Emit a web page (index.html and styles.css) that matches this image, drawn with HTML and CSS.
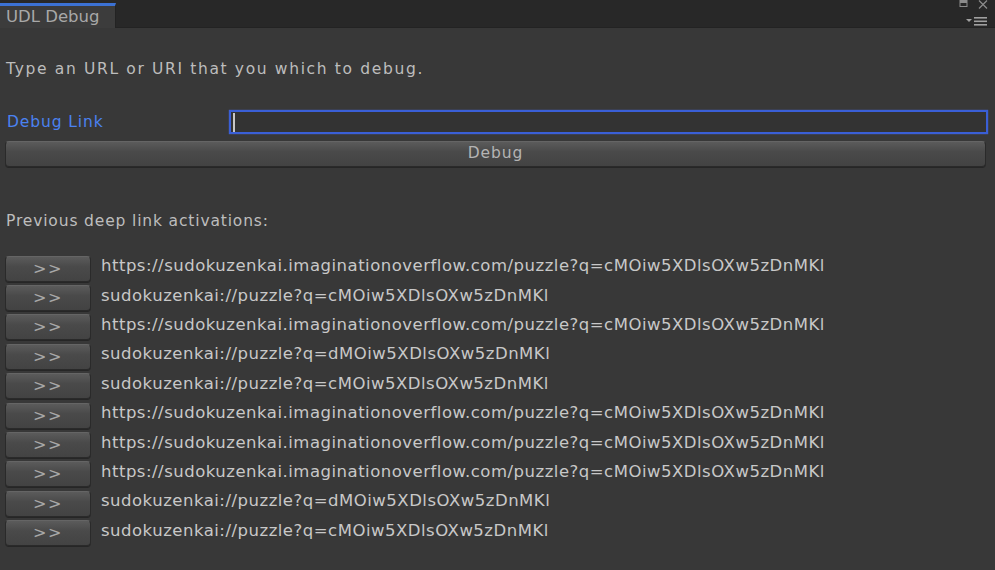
FILE: index.html
```html
<!DOCTYPE html>
<html>
<head>
<meta charset="utf-8">
<link rel="stylesheet" href="styles.css">
</head>
<body>
<div class="window">
  <div class="tabbar">
    <div class="tab">UDL Debug</div>
    <div class="controls">
      <div class="ctl-top">
        <svg width="10" height="8" viewBox="0 0 10 8"><rect x="1" y="0.5" width="7" height="6" fill="none" stroke="#8c8c8c" stroke-width="1"/><rect x="1" y="0.5" width="7" height="2.5" fill="#8c8c8c"/></svg>
        <svg width="12" height="9" viewBox="0 0 12 9"><path d="M2 0.5 L10 8.5 M10 0.5 L2 8.5" stroke="#8c8c8c" stroke-width="1.2"/></svg>
      </div>
      <div class="ctl-menu">
        <svg width="22" height="9" viewBox="0 0 22 9"><path d="M0 2 L6 2 L3 5 Z" fill="#a0a0a0"/><rect x="8" y="0" width="13" height="1.6" fill="#a0a0a0"/><rect x="8" y="3.5" width="13" height="1.6" fill="#a0a0a0"/><rect x="8" y="7" width="13" height="1.6" fill="#a0a0a0"/></svg>
      </div>
    </div>
  </div>
  <div class="content">
    <p class="label intro">Type an URL or URI that you which to debug.</p>
    <div class="field-row">
      <span class="field-label">Debug Link</span>
      <div class="input"><span class="caret"></span></div>
    </div>
    <div class="btn wide">Debug</div>
    <p class="label prev">Previous deep link activations:</p>
    <div class="list">
      <div class="row"><div class="btn small">&gt;&gt;</div><span class="link">https://sudokuzenkai.imaginationoverflow.com/puzzle?q=cMOiw5XDlsOXw5zDnMKl</span></div>
      <div class="row"><div class="btn small">&gt;&gt;</div><span class="link">sudokuzenkai://puzzle?q=cMOiw5XDlsOXw5zDnMKl</span></div>
      <div class="row"><div class="btn small">&gt;&gt;</div><span class="link">https://sudokuzenkai.imaginationoverflow.com/puzzle?q=cMOiw5XDlsOXw5zDnMKl</span></div>
      <div class="row"><div class="btn small">&gt;&gt;</div><span class="link">sudokuzenkai://puzzle?q=dMOiw5XDlsOXw5zDnMKl</span></div>
      <div class="row"><div class="btn small">&gt;&gt;</div><span class="link">sudokuzenkai://puzzle?q=cMOiw5XDlsOXw5zDnMKl</span></div>
      <div class="row"><div class="btn small">&gt;&gt;</div><span class="link">https://sudokuzenkai.imaginationoverflow.com/puzzle?q=cMOiw5XDlsOXw5zDnMKl</span></div>
      <div class="row"><div class="btn small">&gt;&gt;</div><span class="link">https://sudokuzenkai.imaginationoverflow.com/puzzle?q=cMOiw5XDlsOXw5zDnMKl</span></div>
      <div class="row"><div class="btn small">&gt;&gt;</div><span class="link">https://sudokuzenkai.imaginationoverflow.com/puzzle?q=cMOiw5XDlsOXw5zDnMKl</span></div>
      <div class="row"><div class="btn small">&gt;&gt;</div><span class="link">sudokuzenkai://puzzle?q=dMOiw5XDlsOXw5zDnMKl</span></div>
      <div class="row"><div class="btn small">&gt;&gt;</div><span class="link">sudokuzenkai://puzzle?q=cMOiw5XDlsOXw5zDnMKl</span></div>
    </div>
  </div>
</div>
</body>
</html>
```

FILE: styles.css
```css
html, body {
  margin: 0;
  padding: 0;
  background: #383838;
}
body {
  font-family: "DejaVu Sans", Verdana, sans-serif;
  width: 995px;
  height: 570px;
  overflow: hidden;
}
.window {
  display: flex;
  flex-direction: column;
  height: 570px;
}
.tabbar {
  height: 27px;
  background: #282828;
  border-bottom: 1px solid #232323;
  display: flex;
  justify-content: space-between;
  align-items: flex-end;
}
.tab {
  height: 22px;
  background: #3c3c3c;
  border-top: 3px solid #3c72d4;
  border-right: 1px solid #232323;
  color: #a8a8a8;
  font-size: 16.5px;
  line-height: 21px;
  padding-left: 6px;
  width: 109px;
  margin-bottom: -1px;
}
.controls {
  display: flex;
  flex-direction: column;
  align-items: flex-end;
  align-self: stretch;
  padding-right: 6px;
}
.ctl-top {
  display: flex;
  gap: 8px;
  align-items: flex-start;
  height: 12px;
}
.ctl-menu {
  margin-top: 2px;
  margin-right: 1px;
}
.content {
  padding: 0 9px 0 5px;
}
.label {
  margin: 0;
  color: #bdbdbd;
  font-size: 15.5px;
  padding-left: 1px;
}
.intro {
  margin-top: 31px;
  line-height: 20px;
  letter-spacing: 1.65px;
}
.field-row {
  display: flex;
  align-items: center;
  margin-top: 31px;
  height: 24px;
}
.field-label {
  color: #4b82f0;
  font-size: 15.5px;
  letter-spacing: 0.9px;
  width: 222px;
  padding-left: 2px;
}
.input {
  flex: 1;
  height: 20px;
  border: 2px solid #3a5fd6;
  background: #333333;
  box-shadow: 0 0 1px #4d6ee0;
  display: flex;
  align-items: center;
  padding-left: 2px;
  margin-right: -2px;
}
.caret {
  width: 2px;
  height: 19px;
  background: #c8c8c8;
}
.btn {
  background: linear-gradient(#5b5b5b, #4a4a4a 40%, #434343);
  border: 1px solid #2a2a2a;
  border-top-color: #656565;
  border-radius: 4px;
  box-shadow: 0 1px 0 #262626;
  color: #b4b4b4;
  text-align: center;
  box-sizing: border-box;
}
.wide {
  margin-top: 7px;
  height: 26px;
  line-height: 23px;
  font-size: 15.5px;
  letter-spacing: 0.9px;
}
.prev {
  margin-top: 44px;
  line-height: 20px;
  letter-spacing: 0.85px;
}
.list {
  margin-top: 23px;
  display: flex;
  flex-direction: column;
}
.row {
  display: flex;
  align-items: center;
  height: 29.4px;
}
.small {
  width: 86px;
  height: 26px;
  line-height: 24px;
  font-size: 16px;
  color: #a8a8a8;
  letter-spacing: 1.5px;
}
.link {
  margin-left: 10px;
  color: #c8c8c8;
  font-size: 16.5px;
  letter-spacing: 0.5px;
  white-space: nowrap;
  margin-top: -6px;
}
```
